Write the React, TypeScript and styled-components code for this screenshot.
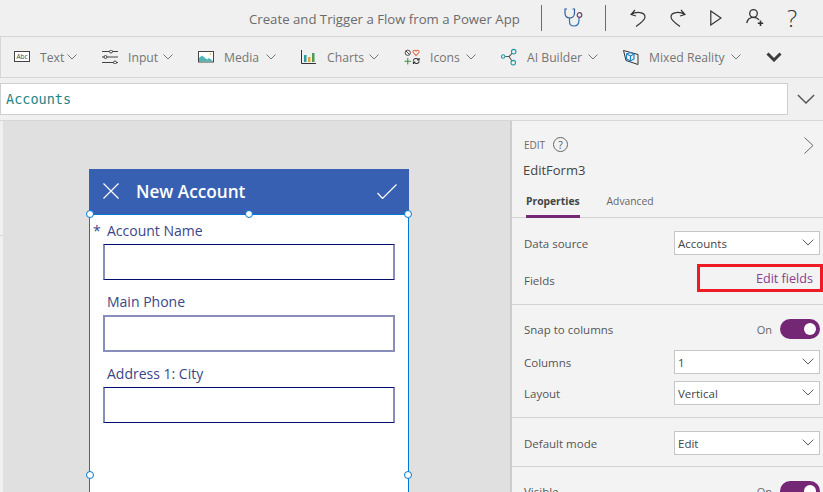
import { ReactNode } from 'react'
import styled, { createGlobalStyle } from 'styled-components'

const GlobalStyle = createGlobalStyle`
    html, body {
        margin: 0;
        padding: 0;
        background: #f0f0f0;
    }
    * {
        box-sizing: border-box;
    }
`

function Chevron({ size = 10, color = '#777' }: { size?: number; color?: string }) {
    return <svg width={size} height={size * 0.6} viewBox="0 0 10 6" fill="none">
        <path d="M0.5 0.5 L5 5 L9.5 0.5" stroke={color} strokeWidth={size > 10 ? 0.8 : 1} />
    </svg>
}

const TextIcon = () => <svg width="16" height="12" viewBox="0 0 16 12">
    <rect x="0.5" y="0.5" width="15" height="10" fill="#fff" stroke="#444" />
    <text x="8" y="8" fontSize="6.5" textAnchor="middle" fill="#444" fontFamily="Open Sans, sans-serif">Abc</text>
</svg>

const InputIcon = () => <svg width="16" height="14" viewBox="0 0 16 14" fill="#f0f0f0" stroke="#444">
    <path d="M0 1.5H16M0 7H16M0 12.5H16" />
    <circle cx="9" cy="1.5" r="1.5" />
    <circle cx="3.5" cy="7" r="1.5" />
    <circle cx="13" cy="12.5" r="1.5" />
</svg>

const MediaIcon = () => <svg width="16" height="12" viewBox="0 0 16 12">
    <rect x="0.5" y="0.5" width="15" height="10.5" fill="#fff" stroke="#444" />
    <path d="M1 10.5V7L4 4.5L9 8.5L11 7L15 10V10.5Z" fill="#4fb5b5" />
    <circle cx="12.5" cy="3" r="0.8" fill="#e8a33d" />
</svg>

const ChartsIcon = () => <svg width="15" height="14" viewBox="0 0 15 14">
    <path d="M0.5 0V13.5H15" fill="none" stroke="#333" />
    <rect x="3" y="5" width="2.5" height="7" fill="#2a9d9d" />
    <rect x="7" y="7" width="2.5" height="5" fill="#e8a33d" />
    <rect x="11" y="3" width="2.5" height="9" fill="#4d9a52" />
</svg>

const IconsIcon = () => <svg width="17" height="16" viewBox="0 0 17 16" fill="none">
    <circle cx="4" cy="3.5" r="2.8" stroke="#444" />
    <path d="M2 1.5L6 5.5" stroke="#444" />
    <path d="M12.8 6.5L9.8 3.2C8.6 1.5 10.8 0 12.8 1.7C14.8 0 17 1.5 15.8 3.2Z" stroke="#e8623d" strokeWidth="1.1" />
    <path d="M4 9V16M0.5 12.5H7.5" stroke="#3d8f45" strokeWidth="1.1" />
    <path d="M10 12C10 9.5 13.5 8.8 15 10.5M16 12.5C16 15 12.5 15.7 11 14M14 11H16V9M12 13.5H10V15.5" stroke="#333" strokeWidth="1.2" />
</svg>

const AiIcon = () => <svg width="17" height="18" viewBox="0 0 17 18" fill="none" stroke="#1f9aa0" strokeWidth="1.1">
    <path d="M12 5L8.5 8.5L11.5 13M4.5 8.5H8.5" stroke="#555" />
    <circle cx="2.3" cy="8.5" r="1.8" />
    <circle cx="13.5" cy="3.3" r="2.4" />
    <circle cx="13" cy="15" r="2.4" />
</svg>

const MixedIcon = () => <svg width="16" height="15" viewBox="0 0 16 15" fill="none">
    <path d="M0.5 0.5L15 4.5V14.5L3 10.5Z" stroke="#333" />
    <path d="M3.5 4L7.5 2.5L11 4V9L7.5 11L3.5 9ZM3.5 4L7.5 6L11 4M7.5 6V11" stroke="#1f7fc4" strokeWidth="1.1" />
</svg>

const Stethoscope = () => <svg width="20" height="19" viewBox="0 0 20 19" fill="none">
    <path d="M3 1H1V5C1 8 3 10 6 10C8.5 10 10.5 8 10.5 5V1H8.5" stroke="#2f5f9e" strokeWidth="1.2" />
    <path d="M5.5 10V13.5C5.5 16.5 7.5 18 10 18C13 18 15 16 15 12V9.5" stroke="#2f6fb0" strokeWidth="1.2" />
    <circle cx="15.5" cy="7" r="2.3" stroke="#7a3f6d" strokeWidth="1.2" />
</svg>

const Undo = () => <svg width="16" height="18" viewBox="0 0 16 18" fill="none" stroke="#333" strokeWidth="1.2">
    <path d="M5 1L1 5.5L6 7M1 5.5C6 2.5 15 2.5 15 8C15 11 11 14 6 17.5" />
</svg>

const Redo = () => <svg width="16" height="18" viewBox="0 0 16 18" fill="none" stroke="#333" strokeWidth="1.2">
    <path d="M11 1L15 5.5L10 7M15 5.5C10 2.5 1 2.5 1 8C1 11 5 14 10 17.5" />
</svg>

const Play = () => <svg width="12" height="16" viewBox="0 0 12 16" fill="none" stroke="#333" strokeWidth="1.2">
    <path d="M0.8 1V15L11 8Z" />
</svg>

const UserAdd = () => <svg width="18" height="18" viewBox="0 0 18 18" fill="none" stroke="#333" strokeWidth="1.3">
    <circle cx="7.5" cy="4.5" r="3.8" />
    <path d="M0.7 14C1.5 10 4.5 8.3 7.5 8.3C10 8.3 11.8 9.3 13 11" />
    <path d="M14.5 11.5V17M11.8 14.2H17.2" strokeWidth="1.6" />
</svg>

const CloseIcon = () => <svg width="16" height="16" viewBox="0 0 16 16" stroke="#fff" strokeWidth="1.2">
    <path d="M0.5 0.5L15.5 15.5M15.5 0.5L0.5 15.5" />
</svg>

const CheckIcon = () => <svg width="20" height="15" viewBox="0 0 20 15" fill="none" stroke="#fff" strokeWidth="1.2">
    <path d="M0.5 9L5.5 14.5L19.5 0.5" />
</svg>

function ToolItem({ icon, label, width }: { icon: ReactNode; label: string; width: number }) {
    return <Tool>
        <ToolGlyph>{icon}</ToolGlyph>
        <ToolLabel $width={width}>{label}</ToolLabel>
        <Chevron />
    </Tool>
}

function Select({ value }: { value: string }) {
    return <SelectBox>
        {value}
        <Chevron size={12} color="#555" />
    </SelectBox>
}

export default function App() {
    return <Page>
        <GlobalStyle />
        <TitleBar>
            <AppTitle>Create and Trigger a Flow from a Power App</AppTitle>
            <Divider />
            <Stethoscope />
            <Divider />
            <TitleActions>
                <Undo />
                <Redo />
                <Play />
                <UserAdd />
                <HelpMark>?</HelpMark>
            </TitleActions>
        </TitleBar>

        <Toolbar>
            <ToolItem icon={<TextIcon />} label="Text" width={22} />
            <ToolItem icon={<InputIcon />} label="Input" width={30} />
            <ToolItem icon={<MediaIcon />} label="Media" width={37} />
            <ToolItem icon={<ChartsIcon />} label="Charts" width={37} />
            <ToolItem icon={<IconsIcon />} label="Icons" width={31} />
            <ToolItem icon={<AiIcon />} label="AI Builder" width={56} />
            <ToolItem icon={<MixedIcon />} label="Mixed Reality" width={77} />
            <svg width="16" height="10" viewBox="0 0 16 10" fill="none">
                <path d="M1.5 1.5L8 8L14.5 1.5" stroke="#3c3c3c" strokeWidth="3" />
            </svg>
        </Toolbar>

        <FormulaBar>
            <FormulaInput>Accounts</FormulaInput>
            <FormulaToggle>
                <Chevron size={18} color="#555" />
            </FormulaToggle>
        </FormulaBar>

        <Workspace>
            <Rail />
            <Canvas>
                <FormScreen>
                    <FormHeader>
                        <CloseIcon />
                        <FormTitle>New Account</FormTitle>
                        <CheckIcon />
                    </FormHeader>
                    <FormBody>
                        <HandleDot $x="-0.5px" $y="-1px" />
                        <HandleDot $x="50%" $y="-1px" />
                        <HandleDot $x="100%" $y="-1px" />
                        <HandleDot $x="-0.5px" $y="260px" />
                        <HandleDot $x="100%" $y="260px" />
                        <Field>
                            <FieldLabel>
                                <Required>*</Required>
                                Account Name
                            </FieldLabel>
                            <FieldInput />
                        </Field>
                        <Field>
                            <FieldLabel>Main Phone</FieldLabel>
                            <FieldInput $focused />
                        </Field>
                        <Field>
                            <FieldLabel>Address 1: City</FieldLabel>
                            <FieldInput />
                        </Field>
                    </FormBody>
                </FormScreen>
            </Canvas>

            <Panel>
                <PanelHead>
                    <PanelTopRow>
                        <EditCaption>EDIT</EditCaption>
                        <HelpCircle>?</HelpCircle>
                        <CollapseIcon width="10" height="17" viewBox="0 0 10 17" fill="none">
                            <path d="M0.5 0.5L9 8.5L0.5 16.5" stroke="#666" />
                        </CollapseIcon>
                    </PanelTopRow>
                    <ControlName>EditForm3</ControlName>
                    <Tabs>
                        <Tab $active>Properties</Tab>
                        <Tab>Advanced</Tab>
                    </Tabs>
                </PanelHead>

                <Section>
                    <Row>
                        <RowLabel>Data source</RowLabel>
                        <Select value="Accounts" />
                    </Row>
                    <Row $gap={9}>
                        <FieldsLabel>Fields</FieldsLabel>
                        <EditFieldsBox>Edit fields</EditFieldsBox>
                    </Row>
                </Section>

                <Section $top={14}>
                    <Row>
                        <RowLabel>Snap to columns</RowLabel>
                        <ToggleGroup>
                            On
                            <Toggle><Knob /></Toggle>
                        </ToggleGroup>
                    </Row>
                    <Row $gap={11}>
                        <RowLabel>Columns</RowLabel>
                        <Select value="1" />
                    </Row>
                    <Row $gap={7}>
                        <RowLabel>Layout</RowLabel>
                        <Select value="Vertical" />
                    </Row>
                </Section>

                <Section $bottom={11}>
                    <Row>
                        <RowLabel>Default mode</RowLabel>
                        <Select value="Edit" />
                    </Row>
                </Section>

                <LastSection $top={14}>
                    <Row>
                        <RowLabel>Visible</RowLabel>
                        <ToggleGroup>
                            On
                            <Toggle><Knob /></Toggle>
                        </ToggleGroup>
                    </Row>
                </LastSection>
            </Panel>
        </Workspace>
    </Page>
}

const Page = styled.div`
    width: 823px;
    height: 492px;
    overflow: hidden;
    display: flex;
    flex-direction: column;
    background: #f0f0f0;
    font-family: "Open Sans", "Liberation Sans", sans-serif;
`

const TitleBar = styled.header`
    height: 37px;
    flex: none;
    display: flex;
    align-items: center;
    padding-bottom: 1px;
    padding-left: 249px;
    border-bottom: 1px solid #d6d6d6;
    > svg {
        margin: 0 21px 0 2px;
    }
`

const AppTitle = styled.div`
    width: 272px;
    white-space: nowrap;
    font-size: 13.2px;
    color: #6b6b6b;
    margin: 2px 20px 0 0;
`

const Divider = styled.div`
    width: 1px;
    height: 26px;
    background: #6d6d6d;
    margin-right: 20px;
`

const TitleActions = styled.div`
    display: flex;
    align-items: center;
    gap: 24px;
    margin-left: 4px;
`

const HelpMark = styled.span`
    font-size: 24px;
    font-weight: 300;
    line-height: 1;
    color: #333;
    margin-left: -1px;
`

const Toolbar = styled.div`
    height: 41px;
    flex: none;
    display: flex;
    align-items: center;
    gap: 25px;
    padding-left: 14px;
    border-bottom: 1px solid #d6d6d6;
    box-shadow: inset 2px 0 0 -1px #d6d6d6;
`

const Tool = styled.div`
    display: flex;
    align-items: center;
`

const ToolGlyph = styled.span`
    width: 16px;
    display: flex;
    margin-right: 10px;
`

const ToolLabel = styled.span<{ $width: number }>`
    width: ${({ $width }) => $width}px;
    white-space: nowrap;
    font-size: 12.2px;
    color: #757575;
    margin-right: 5px;
`

const FormulaBar = styled.div`
    height: 43px;
    flex: none;
    display: flex;
    align-items: center;
    border-bottom: 1px solid #d6d6d6;
`

const FormulaInput = styled.div`
    width: 788px;
    height: 32px;
    display: flex;
    align-items: center;
    padding-left: 5px;
    background: #fff;
    border: 1px solid #cfcfcf;
    font-family: "DejaVu Sans Mono", monospace;
    font-size: 13.5px;
    color: #1b8585;
`

const FormulaToggle = styled.div`
    flex: 1;
    display: flex;
    justify-content: center;
`

const Workspace = styled.div`
    flex: 1;
    min-height: 0;
    display: flex;
`

const Rail = styled.div`
    width: 3px;
    height: 115px;
    flex: none;
    border-bottom: 1px solid #d6d6d6;
`

const Canvas = styled.div`
    width: 507px;
    flex: none;
    padding: 48px 0 0 86px;
    background: #e0e0e0;
    overflow: hidden;
`

const FormScreen = styled.div`
    width: 320px;
`

const FormHeader = styled.div`
    height: 45px;
    display: flex;
    align-items: center;
    padding: 0 12px 1px 14px;
    background: #3860b2;
`

const FormTitle = styled.div`
    flex: 1;
    margin-left: 17px;
    font-size: 17.2px;
    font-weight: 600;
    color: #fff;
`

const FormBody = styled.div`
    position: relative;
    height: 522px;
    padding: 8px 13px 0;
    background: #fff;
    border: 1px solid #0078d4;
`

const HandleDot = styled.span<{ $x: string; $y: string }>`
    position: absolute;
    left: ${({ $x }) => $x};
    top: ${({ $y }) => $y};
    width: 8px;
    height: 8px;
    transform: translate(-50%, -50%);
    background: #fff;
    border: 1px solid #0078d4;
    border-radius: 50%;
`

const Field = styled.div`
    margin-bottom: 14px;
`

const FieldLabel = styled.div`
    position: relative;
    height: 21px;
    padding-left: 4px;
    font-size: 14px;
    line-height: 16px;
    color: #3a4688;
`

const Required = styled.span`
    position: absolute;
    left: -10px;
    top: 0;
`

const FieldInput = styled.div<{ $focused?: boolean }>`
    width: 292px;
    height: ${({ $focused }) => ($focused ? '37px' : '36px')};
    background: #fff;
    border-style: solid;
    border-color: ${({ $focused }) => ($focused ? '#888eb9' : '#000f6b #888eb9')};
    border-width: ${({ $focused }) => ($focused ? '2px' : '1px 2px')};
`

const Panel = styled.aside`
    flex: 1;
    min-width: 0;
    background: #f3f3f3;
    border-left: 2px solid #cdcdcd;
    font-size: 11.5px;
    color: #555;
`

const PanelHead = styled.div`
    height: 97px;
    padding-left: 12px;
    border-bottom: 1px solid #d2d2d2;
`

const PanelTopRow = styled.div`
    height: 34px;
    padding-top: 13px;
    display: flex;
    align-items: center;
`

const EditCaption = styled.span`
    font-size: 10px;
    color: #6b6b6b;
`

const HelpCircle = styled.span`
    width: 15px;
    height: 15px;
    margin-left: 8px;
    display: flex;
    align-items: center;
    justify-content: center;
    border: 1px solid #666;
    border-radius: 50%;
    font-size: 10.5px;
    color: #555;
`

const CollapseIcon = styled.svg`
    margin-left: auto;
    margin-right: 9px;
    margin-top: 2px;
`

const ControlName = styled.div`
    height: 22px;
    margin: 4px 0 0 -1px;
    font-size: 13px;
    line-height: 22px;
    color: #444;
`

const Tabs = styled.div`
    display: flex;
    gap: 27px;
    margin-top: 11px;
    padding-left: 2px;
`

const Tab = styled.div<{ $active?: boolean }>`
    height: 26px;
    line-height: 18px;
    font-size: 10.3px;
    font-weight: ${({ $active }) => ($active ? 700 : 400)};
    color: ${({ $active }) => ($active ? '#444' : '#666')};
    border-bottom: 3px solid ${({ $active }) => ($active ? '#742774' : 'transparent')};
`

const Section = styled.section<{ $top?: number; $bottom?: number }>`
    padding: ${({ $top }) => $top ?? 13}px 3px ${({ $bottom }) => $bottom ?? 12}px 12px;
    border-bottom: 1px solid #d2d2d2;
`

const LastSection = styled(Section)`
    border-bottom: 0;
`

const Row = styled.div<{ $gap?: number }>`
    display: flex;
    align-items: center;
    justify-content: space-between;
    margin-top: ${({ $gap }) => $gap ?? 0}px;
`

const RowLabel = styled.span`
    color: #555;
`

const FieldsLabel = styled(RowLabel)`
    margin-top: 4px;
`

const SelectBox = styled.div`
    width: 146px;
    height: 24px;
    display: flex;
    align-items: center;
    justify-content: space-between;
    padding: 0 5px 0 3px;
    background: #fff;
    border: 1px solid #c6c6c6;
    color: #444;
`

const EditFieldsBox = styled.div`
    width: 126px;
    height: 28px;
    margin-right: -3px;
    display: flex;
    align-items: center;
    justify-content: flex-end;
    padding: 0 7px 0 0;
    border: 3px solid #ed1c24;
    color: #8a3d8f;
    font-size: 12.6px;
`

const ToggleGroup = styled.div`
    display: flex;
    align-items: center;
    gap: 8px;
    font-size: 11px;
    color: #666;
`

const Toggle = styled.div`
    width: 40px;
    height: 20px;
    display: flex;
    align-items: center;
    justify-content: flex-end;
    padding-right: 4px;
    background: #742774;
    border-radius: 10px;
`

const Knob = styled.span`
    width: 12px;
    height: 12px;
    background: #fff;
    border-radius: 50%;
`
